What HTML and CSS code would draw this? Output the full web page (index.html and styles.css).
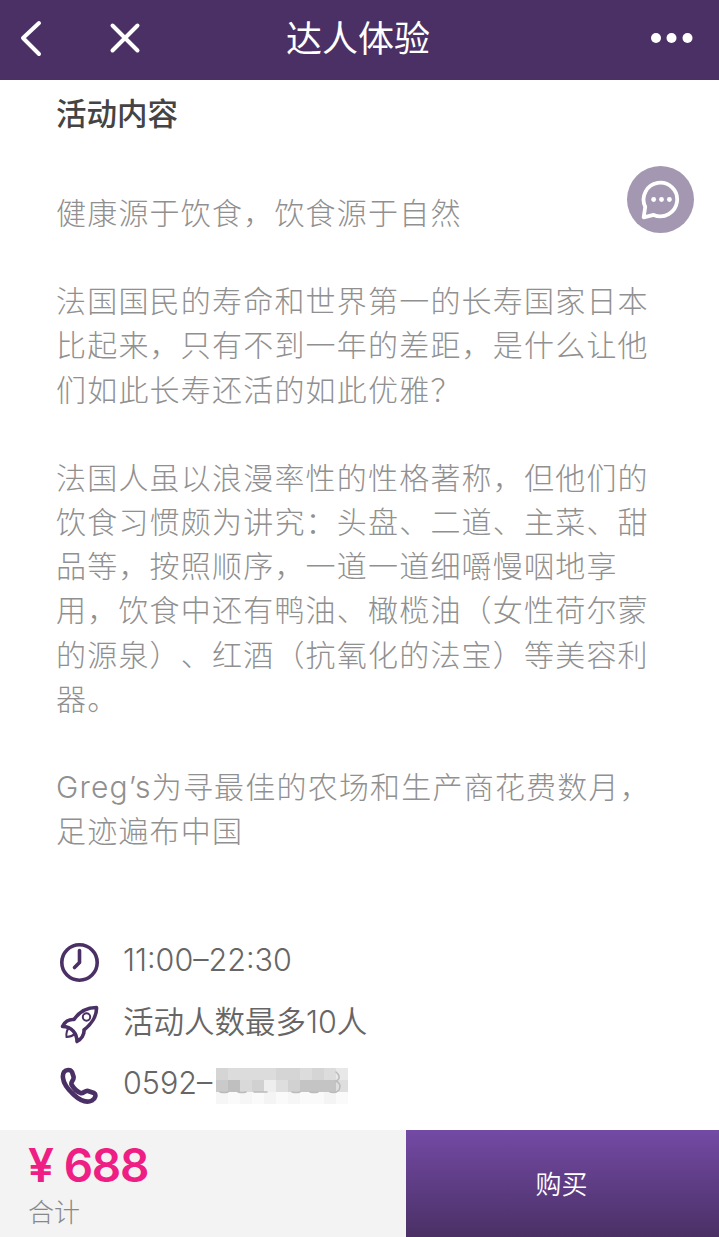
FILE: index.html
```html
<!DOCTYPE html>
<html lang="zh-CN">

<head>
    <meta charset="UTF-8">
    <meta name="viewport" content="width=device-width, initial-scale=1.0">
    <title>达人体验</title>
    <link rel="stylesheet" href="styles.css">
</head>

<body>

    <header>
        <div class="nav-left">
            <svg class="back" width="24" height="38" viewBox="0 0 24 38">
                <path d="M21 4L5 19l16 16" />
            </svg>
            <svg class="close" width="32" height="32" viewBox="0 0 32 32">
                <path d="M3.500 3.500l25 25M28.500 3.500l-25 25" />
            </svg>
        </div>
        <h1>达人体验</h1>
        <svg class="more" width="44" height="12" viewBox="0 0 44 12">
            <circle cx="6" cy="6" r="5" />
            <circle cx="21.500" cy="6" r="5" />
            <circle cx="37.500" cy="6" r="5" />
        </svg>
    </header>

    <main>
        <h2>活动内容</h2>

        <div class="intro">
            <p>健康源于饮食，饮食源于自然</p>
            <p>法国国民的寿命和世界第一的长寿国家日本<br>比起来，只有不到一年的差距，是什么让他<br>们如此长寿还活的如此优雅？</p>
            <p>法国人虽以浪漫率性的性格著称，但他们的<br>饮食习惯颇为讲究：头盘、二道、主菜、甜<br>品等，按照顺序，一道一道细嚼慢咽地享<br>用，饮食中还有鸭油、橄榄油（女性荷尔蒙<br>的源泉）、红酒（抗氧化的法宝）等美容利<br>器。</p>
            <p>Greg’s为寻最佳的农场和生产商花费数月，<br>足迹遍布中国</p>
        </div>

        <ul class="info">
            <li>
                <svg width="40" height="40" viewBox="0 0 40 40">
                    <circle cx="20.500" cy="19.500" r="17.700" />
                    <path d="M20.500 7.500v12l-5 5" />
                </svg>
                <span>11:00–22:30</span>
            </li>
            <li>
                <svg width="40" height="40" viewBox="0 0 40 40">
                    <path d="M15 14.500C20 7 28 2.500 37.500 2.500C38 11 32 19.500 25 25C25.500 30 22 34.500 18 36.500C18 29 13 21.500 3.500 21.500C5.500 17 10 14 15 14.500Z" />
                    <circle class="thin" cx="27.500" cy="12" r="3.700" />
                    <path class="thin" d="M10 22.500C7.500 25.500 7 28.500 7.500 32C10.500 32 13.500 31 15.500 29" />
                </svg>
                <span>活动人数最多10人</span>
            </li>
            <li>
                <svg class="phone" width="40" height="40" viewBox="0 0 40 40">
                    <path d="M5 6C7 3.500 11.500 3 13 6L14.500 10.500C15.500 14 11.500 15.500 12.500 18.500C14.500 22 18 25.500 21.500 27C24.500 28 26 24 29 25L35 27C37.500 28.500 36.500 32.500 33 34.500C28 37 21 34.500 14.500 28.500C8 22.500 4.500 17 4 12C3.700 9.500 4 7.500 5 6Z" />
                </svg>
                <span>0592–</span>
                <svg class="mask" width="132" height="36" viewBox="0 0 132 36">
                    <g fill="#d5d5d5">
                        <path d="M0 0h12v12H0z" />
                        <path fill="#dcdcdc" d="M12 0h48v12H12zM84 0h12v12H84zM108 0h12v12h-12z" />
                        <path d="M60 0h24v12H60zM96 0h12v12H96z" />
                        <path fill="#e8e8e8" d="M120 0h12v12h-12z" />
                        <path fill="#cacaca" d="M0 12h12v12H0z" />
                        <path fill="#bfbfbf" d="M12 12h12v12H12z" />
                        <path fill="#d9d9d9" d="M24 12h12v12H24z" />
                        <path fill="#d1d1d1" d="M36 12h12v12H36zM72 12h12v12H72z" />
                        <path fill="#eeeeee" d="M48 12h12v12H48z" />
                        <path fill="#dedede" d="M60 12h12v12H60zM120 12h12v12h-12z" />
                        <path fill="#c4c4c4" d="M84 12h36v12H84z" />
                        <path fill="#f6f6f6" d="M0 24h12v12H0zM24 24h12v12H24zM72 24h12v12H72z" />
                        <path fill="#fafafa" d="M12 24h12v12H12zM36 24h36v12H36zM84 24h48v12H84z" />
                        <path fill="#f4f4f4" d="M48 24h12v12H48zM108 24h12v12h-12z" />
                    </g>
                    <path class="edge" d="M4 24q4 1 8 0M22 24q4 1 8 0M38 24h13M76 24q4 1 8 0M94 24q4 1 8 0M114 24q6 1.500 9-2q3-6-3-9q5-2 2-7l-2-2" />
                </svg>
            </li>
        </ul>

        <button class="chat">
            <svg width="42" height="42" viewBox="0 0 40 40">
                <path d="M3.500 36.500L5 26.500A16 16 0 1 1 13 34.200Z" />
                <circle cx="13" cy="19.500" r="2.300" />
                <circle cx="20.500" cy="19.500" r="2.300" />
                <circle cx="28" cy="19.500" r="2.300" />
            </svg>
        </button>
    </main>

    <footer>
        <div class="total">
            <div class="price"><span>¥</span>688</div>
            <div class="label">合计</div>
        </div>
        <button class="buy">购买</button>
    </footer>

</body>

</html>
```
FILE: styles.css
```css
* {
    box-sizing: border-box;
}

body {
    font-family: Inter, "Noto Sans CJK SC", sans-serif;
    margin: 0;
    height: 1237px;
    display: flex;
    flex-direction: column;
    background-color: white;
    text-spacing-trim: space-all;
    overflow: hidden;
}

h1,
h2,
p,
ul {
    margin: 0;
    padding: 0;
}

svg {
    display: block;
    flex: none;
    fill: none;
    stroke-linecap: round;
    stroke-linejoin: round;
}

button {
    border: none;
    padding: 0;
    cursor: pointer;
}

header {
    display: grid;
    grid-template-columns: 1fr auto 1fr;
    align-items: center;
    height: 80px;
    padding: 0 25px 4px 18px;
    background-color: #4a3065;
    color: white;
}

header h1 {
    padding: 2px 0 0 4px;
    font-size: 36px;
    line-height: 50px;
    font-weight: 400;
}

.nav-left {
    display: flex;
    align-items: center;
    gap: 67px;
}

.back,
.close {
    stroke: white;
    stroke-width: 4;
}

.more {
    justify-self: end;
    fill: white;
}

main {
    position: relative;
    flex: 1;
    padding: 11px 56px 0;
}

h2 {
    font-size: 30.500px;
    line-height: 46px;
    font-weight: 500;
    color: #444;
}

.intro {
    display: flex;
    flex-direction: column;
    gap: 44.150px;
    margin-top: 54px;
    font-size: 30px;
    line-height: 44.150px;
    font-weight: 300;
    letter-spacing: 1.200px;
    color: #909090;
    white-space: nowrap;
}

.info {
    margin-top: 79px;
    padding-left: 3px;
    list-style: none;
    color: #666;
    font-size: 30.500px;
    font-weight: 350;
}

.info li {
    display: flex;
    align-items: center;
    height: 61.500px;
}

.info span {
    margin: -6px 0 0 24px;
    line-height: 46px;
}

.info svg {
    stroke: #4a3065;
    stroke-width: 3.600;
}

.info .phone {
    stroke-width: 4.600;
}

.info .thin {
    stroke-width: 2;
}

.info .mask {
    margin: 0 0 0 4px;
    stroke: none;
}

.info .edge {
    stroke: #bbb;
    stroke-width: 1.500;
}

.chat {
    position: absolute;
    top: 86px;
    right: 25px;
    width: 67px;
    height: 67px;
    display: flex;
    align-items: center;
    justify-content: center;
    border-radius: 50%;
    background-color: #a497b2;
}

.chat path {
    stroke: white;
    stroke-width: 3.600;
}

.chat circle {
    fill: white;
}

footer {
    display: flex;
    height: 107px;
    background-color: #f3f3f3;
}

.total {
    width: 406px;
    padding: 8px 28px 0;
}

.price {
    display: flex;
    gap: 11px;
    font-size: 46px;
    line-height: 55px;
    font-weight: 600;
    letter-spacing: -1.300px;
    color: #ee1e84;
}

.label {
    margin-top: 2px;
    font-size: 26px;
    line-height: 36px;
    font-weight: 300;
    color: #888;
}

.buy {
    flex: 1;
    padding: 0 2px 2px 0;
    font-family: inherit;
    font-size: 26px;
    font-weight: 350;
    color: white;
    background: linear-gradient(#744aa5, #4a3065);
}
```
